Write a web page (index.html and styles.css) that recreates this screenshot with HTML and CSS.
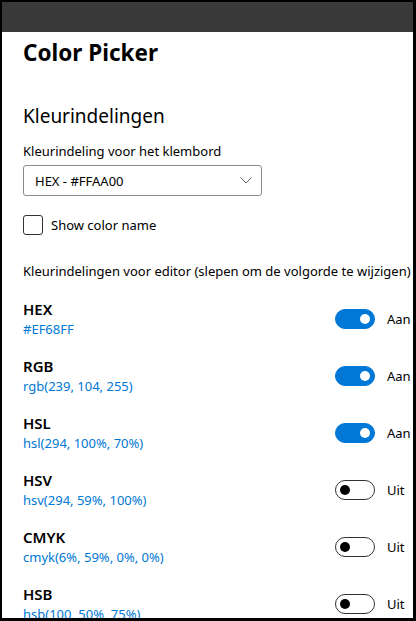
FILE: index.html
```html
<!DOCTYPE html>
<html lang="nl">
<head>
    <meta charset="UTF-8">
    <meta name="viewport" content="width=device-width, initial-scale=1.0">
    <title>Color Picker</title>
    <link rel="stylesheet" href="styles.css">
</head>
<body>
    <div class="window">
        <div class="titlebar"></div>
        <main class="content">
            <h1 class="page-title">Color Picker</h1>

            <section class="settings">
                <h2 class="section-title">Kleurindelingen</h2>

                <div class="field-label">Kleurindeling voor het klembord</div>
                <div class="dropdown">
                    <span>HEX - #FFAA00</span>
                    <!-- 下向きの矢印 -->
                    <svg class="chevron" width="12" height="7" viewBox="0 0 12 7">
                        <path d="M0.5 0.5 L6 6 L11.5 0.5" fill="none" stroke="#666" stroke-width="1"/>
                    </svg>
                </div>

                <label class="checkbox">
                    <span class="box"></span>
                    <span>Show color name</span>
                </label>

                <div class="field-label editor-label">Kleurindelingen voor editor (slepen om de volgorde te wijzigen)</div>

                <ul class="formats">
                    <li class="format">
                        <div class="format-text">
                            <div class="format-name">HEX</div>
                            <div class="format-value">#EF68FF</div>
                        </div>
                        <div class="switch on"><span class="track"><span class="knob"></span></span><span class="state">Aan</span></div>
                    </li>
                    <li class="format">
                        <div class="format-text">
                            <div class="format-name">RGB</div>
                            <div class="format-value">rgb(239, 104, 255)</div>
                        </div>
                        <div class="switch on"><span class="track"><span class="knob"></span></span><span class="state">Aan</span></div>
                    </li>
                    <li class="format">
                        <div class="format-text">
                            <div class="format-name">HSL</div>
                            <div class="format-value">hsl(294, 100%, 70%)</div>
                        </div>
                        <div class="switch on"><span class="track"><span class="knob"></span></span><span class="state">Aan</span></div>
                    </li>
                    <li class="format">
                        <div class="format-text">
                            <div class="format-name">HSV</div>
                            <div class="format-value">hsv(294, 59%, 100%)</div>
                        </div>
                        <div class="switch"><span class="track"><span class="knob"></span></span><span class="state">Uit</span></div>
                    </li>
                    <li class="format">
                        <div class="format-text">
                            <div class="format-name">CMYK</div>
                            <div class="format-value">cmyk(6%, 59%, 0%, 0%)</div>
                        </div>
                        <div class="switch"><span class="track"><span class="knob"></span></span><span class="state">Uit</span></div>
                    </li>
                    <li class="format">
                        <div class="format-text">
                            <div class="format-name">HSB</div>
                            <div class="format-value">hsb(100, 50%, 75%)</div>
                        </div>
                        <div class="switch"><span class="track"><span class="knob"></span></span><span class="state">Uit</span></div>
                    </li>
                </ul>
            </section>
        </main>
    </div>
</body>
</html>
```

FILE: styles.css
```css
/* 基本のスタイル設定 */
html, body {
    margin: 0;
    padding: 0;
    height: 100%;
    background-color: #000;
}

body {
    font-family: 'Noto Sans', 'Open Sans', sans-serif;
    color: #000;
    padding: 2px 3px 3px 2px;
    box-sizing: border-box;
}

/* ウィンドウ */
.window {
    height: 100%;
    background-color: #fff;
    overflow: hidden;
}

.titlebar {
    height: 30px;
    background-color: #393939;
    margin-right: -1px;
}

.content {
    width: 404px;
    padding-left: 21px;
}

.page-title {
    margin: 0;
    padding-top: 5px;
    font-size: 22.5px;
    line-height: 32px;
    font-weight: 700;
}

.section-title {
    margin: 34px 0 0;
    font-size: 19px;
    line-height: 26px;
    font-weight: 400;
}

.field-label {
    margin-top: 12px;
    font-size: 13px;
    line-height: 20px;
    white-space: nowrap;
}

/* ドロップダウン */
.dropdown {
    margin-top: 4px;
    width: 239px;
    height: 31px;
    box-sizing: border-box;
    border: 1px solid #8a8a8a;
    border-radius: 3px;
    display: flex;
    align-items: center;
    justify-content: space-between;
    padding: 0 9px 0 11px;
    font-size: 13px;
}

/* チェックボックス */
.checkbox {
    margin-top: 19px;
    display: flex;
    align-items: center;
    gap: 8px;
    font-size: 13px;
}

.checkbox .box {
    width: 20px;
    height: 20px;
    box-sizing: border-box;
    border: 1px solid #333;
    border-radius: 3px;
}

.editor-label {
    margin-top: 26px;
}

/* フォーマット一覧 */
.formats {
    list-style: none;
    margin: 18px 0 0;
    padding: 0;
    display: flex;
    flex-direction: column;
    gap: 17px;
}

.format {
    display: flex;
    align-items: center;
    justify-content: space-between;
}

.format-name {
    font-size: 15px;
    line-height: 20px;
    font-weight: 600;
}

.format-value {
    font-size: 13px;
    line-height: 20px;
    color: #0078d4;
}

/* トグルスイッチ */
.switch {
    display: flex;
    align-items: center;
    gap: 12px;
    width: 92px;
    font-size: 13px;
}

.track {
    width: 40px;
    height: 20px;
    box-sizing: border-box;
    border: 1px solid #333;
    border-radius: 10px;
    display: flex;
    align-items: center;
    padding: 0 4px;
}

.knob {
    width: 10px;
    height: 10px;
    border-radius: 50%;
    background-color: #000;
}

.switch.on .track {
    background-color: #0078d7;
    border-color: #0078d7;
    justify-content: flex-end;
}

.switch.on .knob {
    background-color: #fff;
}
```
